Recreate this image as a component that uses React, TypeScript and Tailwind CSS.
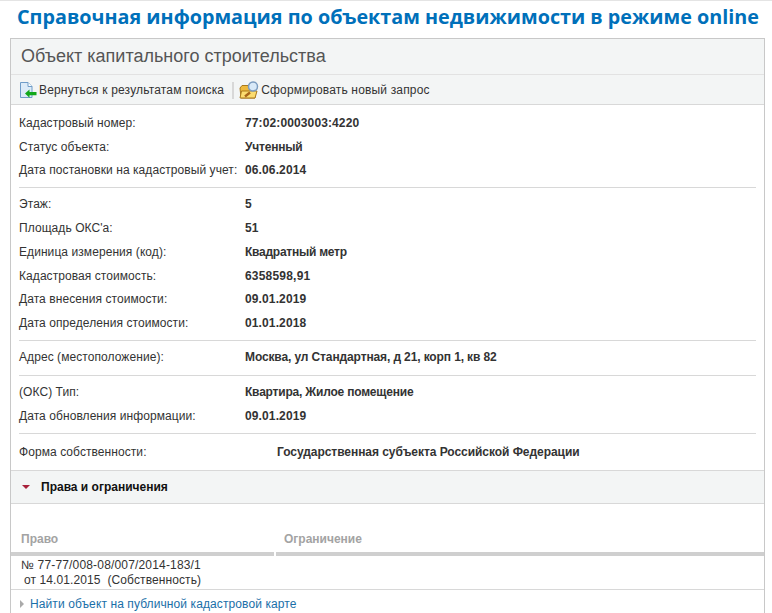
const FONT = "font-['Liberation_Sans',Arial,sans-serif]";

type Row = [string, string, string?];

const GROUPS: Row[][] = [
  [
    ['Кадастровый номер:', '77:02:0003003:4220', 'tracking-[0.12px]'],
    ['Статус объекта:', 'Учтенный', 'tracking-[-0.2px]'],
    ['Дата постановки на кадастровый учет:', '06.06.2014', 'tracking-[0.12px]'],
  ],
  [
    ['Этаж:', '5'],
    ["Площадь ОКС'а:", '51'],
    ['Единица измерения (код):', 'Квадратный метр', 'tracking-[-0.25px]'],
    ['Кадастровая стоимость:', '6358598,91', 'tracking-[0.2px]'],
    ['Дата внесения стоимости:', '09.01.2019', 'tracking-[0.12px]'],
    ['Дата определения стоимости:', '01.01.2018', 'tracking-[0.12px]'],
  ],
  [['Адрес (местоположение):', 'Москва, ул Стандартная, д 21, корп 1, кв 82', 'tracking-[-0.12px]']],
  [
    ['(ОКС) Тип:', 'Квартира, Жилое помещение', 'tracking-[-0.2px]'],
    ['Дата обновления информации:', '09.01.2019', 'tracking-[0.12px]'],
  ],
];

const BackIcon = () => (
  <svg width="18" height="18" viewBox="0 0 18 18" aria-hidden="true">
    <path d="M1.5 1.5h7.5l4 4v11h-11.500z" fill="#dcebf8" stroke="#6f9cc8" />
    <path d="M9 1.500v4h4" fill="#fff" stroke="#6f9cc8" />
    <path d="M6 12.500l4.500-4v2.500h7v3.200h-7v2.500z" fill="#12a81a" />
  </svg>
);

const QueryIcon = () => (
  <svg width="20" height="18" viewBox="0 0 20 18" aria-hidden="true">
    <path d="M1 7l2-2.500h6l2 2.500h5v10H2z" fill="#eeb93c" stroke="#a9791c" />
    <path d="M1 17l1.500-7h15.500l-2 7z" fill="#fbdc6f" stroke="#a9791c" />
    <path d="M6 15.500l5-4" stroke="#a8661a" strokeWidth="2.500" />
    <circle cx="14" cy="5.500" r="4.500" fill="#d8e9f8" stroke="#7c9cc0" strokeWidth="1.500" />
  </svg>
);

export default function App() {
  return (
    <div className={`${FONT} w-[772px] h-[613px] overflow-hidden bg-white`}>
      <div className="border-t border-[#e4e4e4] h-[38px] pl-[17px] pt-[1px]">
        <h1 className="font-['Open_Sans',sans-serif] text-[19.75px] leading-[29px] font-bold whitespace-nowrap text-[#0070ba]">
          Справочная информация по объектам недвижимости в режиме online
        </h1>
      </div>

      <div className="ml-[10px] w-[755px] border border-[#c8c8c8] border-b-0">
        <div className="h-[36px] bg-[#f3f5f5] border-b border-[#e2e2e2] pl-[10px] text-[18px] leading-[35px] text-[#555]">
          Объект капитального строительства
        </div>

        <div className="h-[30px] pt-[1px] bg-[#f3f5f5] border-b border-[#d8d8d8] flex items-center pl-[8px] text-[12px] tracking-[0.17px] text-[#333]">
          <BackIcon />
          <span className="ml-[2px]">Вернуться к результатам поиска</span>
          <span className="ml-[8px] mr-[5px] w-[2px] h-[17px] bg-[#d8d8d8]" />
          <QueryIcon />
          <span className="ml-[2px]">Сформировать новый запрос</span>
        </div>

        <div className="px-[8px] pt-[6px] text-[12px] text-[#333]">
          {GROUPS.map((group, i) => (
            <div key={i} className={i === 2 ? 'border-b border-[#d8d8d8] pb-[6px] mb-[4px]' : 'border-b border-[#d8d8d8] pb-[5px] mb-[4px] last:mb-0'}>
              {group.map(([label, value, tracking]) => (
                <div key={label} className="flex h-[23.8px] items-center whitespace-nowrap">
                  <span className="w-[226px] tracking-[0.07px]">{label}</span>
                  <span className={`font-bold ${tracking ?? ''}`}>{value}</span>
                </div>
              ))}
            </div>
          ))}
        </div>

        <div className="h-[37px] border-b border-[#d8d8d8] flex items-center pl-[8px] text-[12px] text-[#333]">
          <span className="w-[258px] tracking-[0.07px]">Форма собственности:</span>
          <span className="font-bold tracking-[-0.05px]">Государственная субъекта Российской Федерации</span>
        </div>

        <div className="h-[33px] bg-[#f3f5f5] border-b border-[#d8d8d8] flex items-center pl-[11px] text-[12px] font-bold text-[#111]">
          <span className="w-0 h-0 border-x-[4px] border-x-transparent border-t-[4px] border-t-[#a8213a]" />
          <span className="ml-[11px]">Права и ограничения</span>
        </div>

        <div className="pt-[25px] flex gap-[2px] text-[12px] font-bold text-[#a3a3a3]">
          <div className="w-[263px] border-b-[4px] border-[#cfcfcf] pl-[10px] pt-[1px] h-[27px]">Право</div>
          <div className="flex-1 border-b-[4px] border-[#cfcfcf] pl-[8px] pt-[1px] h-[27px]">Ограничение</div>
        </div>

        <div className="h-[34px] pt-[2px] border-b border-[#d8d8d8] pl-[10px] text-[12px] leading-[15px] tracking-[0.17px] text-[#333]">
          <div>№ 77-77/008-08/007/2014-183/1</div>
          <div className="pl-[3px] whitespace-pre tracking-[0.1px]">от 14.01.2015  (Собственность)</div>
        </div>

        <div className="flex items-center pl-[9px] h-[29px] text-[12px] tracking-[0.1px] text-[#1a6fa8]">
          <span className="w-0 h-0 border-y-[4px] border-y-transparent border-l-[4px] border-l-[#aaa]" />
          <span className="ml-[6px]">Найти объект на публичной кадастровой карте</span>
        </div>
      </div>
    </div>
  );
}
